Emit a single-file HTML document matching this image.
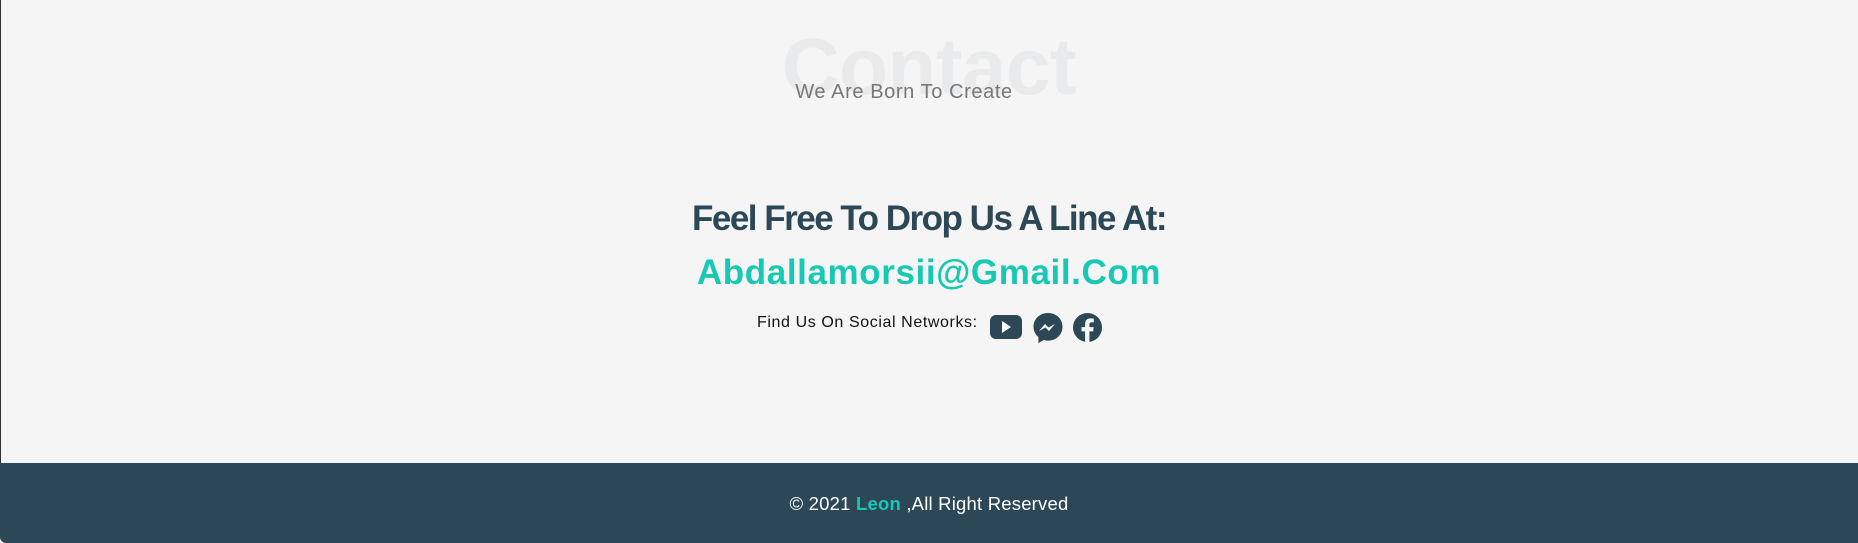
<!DOCTYPE html>
<html><head><meta charset="utf-8"><style>
html,body{margin:0;padding:0;}
body{width:1858px;height:543px;background:#f5f5f5;position:relative;overflow:hidden;font-family:"Liberation Sans",sans-serif;}
.lb{position:absolute;left:0;top:0;width:1px;height:463px;background:#333;}
.big{position:absolute;left:0;width:1858px;text-align:center;top:27px;font-size:80px;font-weight:900;color:#e9eaeb;letter-spacing:-0.5px;line-height:80px;}
.sub{position:absolute;left:0;width:1808px;text-align:center;top:81px;font-size:20px;color:#777;letter-spacing:0.6px;line-height:22px;}
.h{position:absolute;left:0;width:1858px;text-align:center;top:199px;font-size:35px;font-weight:bold;color:#2c4755;letter-spacing:-1.5px;line-height:40px;}
.em{position:absolute;left:0;width:1858px;text-align:center;top:253px;font-size:35px;font-weight:bold;color:#17c9b4;letter-spacing:0.6px;line-height:40px;}
.soc{position:absolute;left:757px;top:313px;font-size:16px;color:#111;letter-spacing:0.6px;line-height:20px;}
.ic{position:absolute;top:312px;}
.ft{position:absolute;left:0;top:463px;width:1858px;height:80px;background:#2c4755;border-bottom-left-radius:6px;}
.ft div{position:absolute;left:0;width:1858px;text-align:center;top:30px;font-size:18.5px;color:#fff;line-height:22px;letter-spacing:0.2px;}
.ft b{color:#17c9b4;}
</style></head><body>
<div class="lb"></div>
<div class="big">Contact</div>
<div class="sub">We Are Born To Create</div>
<div class="h">Feel Free To Drop Us A Line At:</div>
<div class="em">Abdallamorsii@Gmail.Com</div>
<div class="soc">Find Us On Social Networks:</div>
<svg class="ic" style="left:989px" width="34" height="30" viewBox="0 0 34 30"><rect x="1" y="3" width="32" height="24" rx="6" fill="#2c4755"/><path d="M13 9 L22 15 L13 21Z" fill="#fff"/></svg>
<svg class="ic" style="left:1032px" width="32" height="32" viewBox="0 0 32 32"><path d="M16 1C7.7 1 1.5 7 1.5 14.7c0 4.2 1.9 7.8 4.9 10.3V31l5.4-3c1.3.4 2.7.6 4.2.6 8.3 0 14.5-6 14.5-13.9S24.3 1 16 1z" fill="#2c4755"/><path d="M7 19l6-7 3.5 3.5L23 12l-6 7-3.5-3.5z" fill="#fff"/></svg>
<svg class="ic" style="left:1072px" width="31" height="31" viewBox="0 0 32 32"><circle cx="16" cy="16" r="15" fill="#2c4755"/><path d="M18 31V20h3.8l.6-4.4H18v-2.8c0-1.3.4-2.1 2.2-2.1h2.3V6.8c-.4 0-1.8-.2-3.4-.2-3.3 0-5.6 2-5.6 5.8v3.2H9.8V20h3.7v11z" fill="#f5f5f5"/></svg>
<div class="ft"><div>© 2021 <b>Leon</b> ,All Right Reserved</div></div>
</body></html>
